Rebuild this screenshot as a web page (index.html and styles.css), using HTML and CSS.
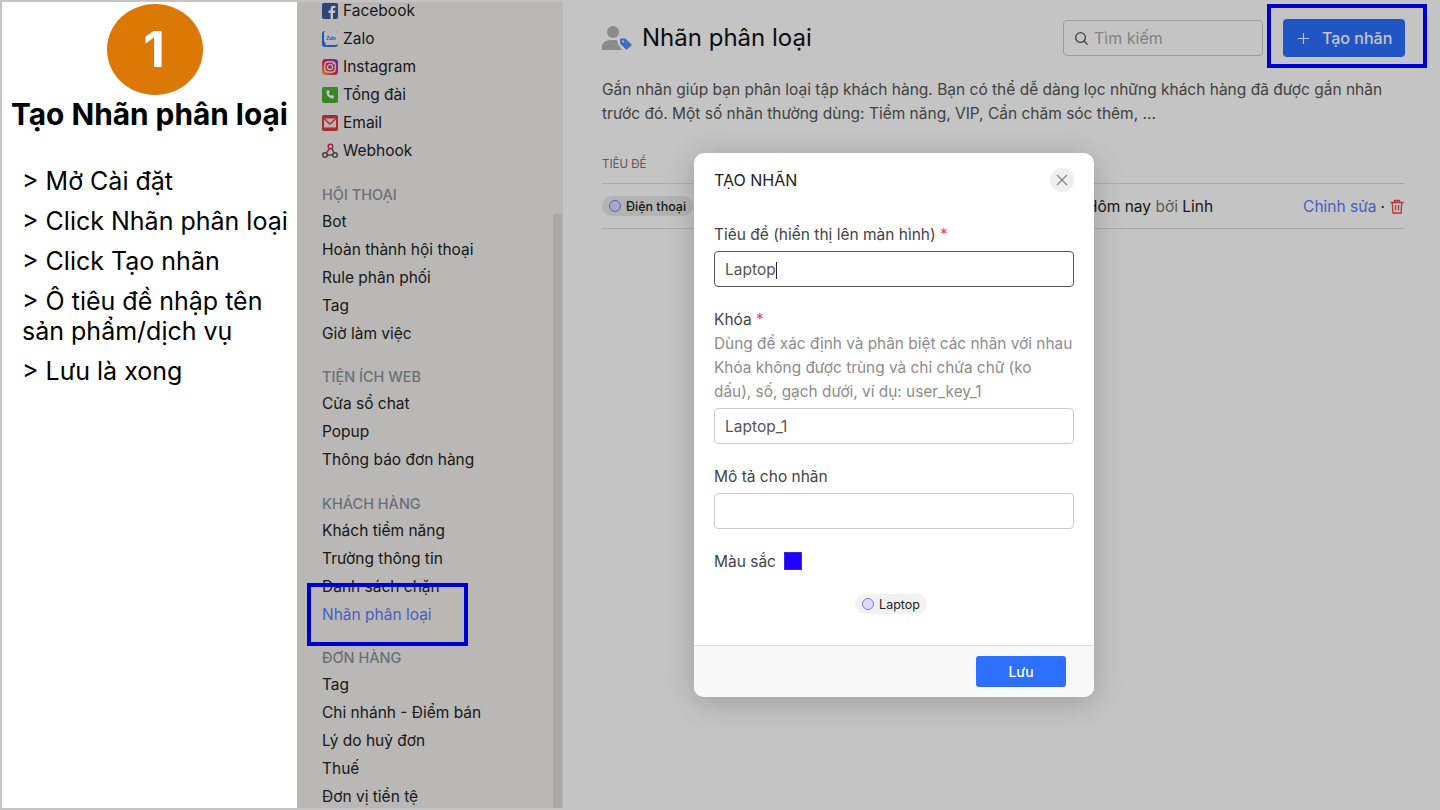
FILE: index.html
```html
<!DOCTYPE html>
<html lang="vi">
<head>
  <meta charset="UTF-8">
  <title>Tạo Nhãn phân loại</title>
  <link rel="stylesheet" href="styles.css">
</head>
<body>
  <div class="page">

    <aside class="guide">
      <div class="step-badge">1</div>
      <h1>Tạo Nhãn phân loại</h1>
      <ul class="steps">
        <li>&gt; Mở Cài đặt</li>
        <li>&gt; Click Nhãn phân loại</li>
        <li>&gt; Click Tạo nhãn</li>
        <li>&gt; Ô tiêu đề nhập tên sản phẩm/dịch vụ</li>
        <li>&gt; Lưu là xong</li>
      </ul>
    </aside>

    <div class="app">
      <nav class="sidebar">
        <div class="nav-scroll">
          <a class="nav-item">
            <svg class="nav-icon" viewBox="0 0 16 16"><rect width="16" height="16" rx="2" fill="#3b5998"/><path d="M11 16V10h2l.4-2.400H11V6.200c0-.8.3-1.200 1.200-1.200h1.200V2.900c-.5-.1-1.100-.1-1.800-.1-1.900 0-3 1.100-3 3v1.800H6.500V10h2.100v6z" fill="#fff"/></svg>
            Facebook
          </a>
          <a class="nav-item">
            <svg class="nav-icon" viewBox="0 0 16 16"><rect width="16" height="16" rx="3" fill="#2f6fe0"/><path d="M4 0h9a3 3 0 0 1 3 3v9a2 2 0 0 1-2 2H5.500l-2 .8.300-2.300C2.500 11.500 2 10.500 2 9V2a2 2 0 0 1 2-2z" fill="#eef2f7"/><text class="zalo-text" x="9" y="8.800" text-anchor="middle">Zalo</text></svg>
            Zalo
          </a>
          <a class="nav-item">
            <svg class="nav-icon" viewBox="0 0 16 16">
              <defs><linearGradient id="insta" x1="0" y1="1" x2="1" y2="0"><stop offset="0" stop-color="#fdb33b"/><stop offset=".45" stop-color="#ee2a5f"/><stop offset="1" stop-color="#6a3fd0"/></linearGradient></defs>
              <rect width="16" height="16" rx="3.500" fill="url(#insta)"/>
              <rect x="2.800" y="2.800" width="10.400" height="10.400" rx="3" fill="none" stroke="#fff" stroke-width="1.200"/>
              <circle cx="8" cy="8" r="2.500" fill="none" stroke="#fff" stroke-width="1.200"/>
              <circle cx="11.200" cy="4.800" r=".7" fill="#fff"/>
            </svg>
            Instagram
          </a>
          <a class="nav-item">
            <svg class="nav-icon" viewBox="0 0 16 16"><rect width="16" height="16" rx="2" fill="#4caf32"/><path d="M5.200 3.500l1.500-.4 1 2.300-1 .9c.4 1 1.200 1.900 2.300 2.500l1-.9 2.200 1.200-.5 1.600c-.2.500-.8.800-1.400.7C7.200 11.300 4.900 8.900 4.400 5c-.1-.7.300-1.300.8-1.500z" fill="#fff"/></svg>
            Tổng đài
          </a>
          <a class="nav-item">
            <svg class="nav-icon" viewBox="0 0 16 16"><rect width="16" height="16" rx="2" fill="#d63c3c"/><rect x="2" y="3.500" width="12" height="9" fill="#f9e4e4"/><path d="M2 3.500L8 9l6-5.500" fill="none" stroke="#d63c3c" stroke-width="1.300"/></svg>
            Email
          </a>
          <a class="nav-item">
            <svg class="nav-icon" viewBox="0 0 16 16" fill="none" stroke-width="1.500">
              <circle cx="8.500" cy="3.500" r="2.300" stroke="#c23b5a"/>
              <circle cx="3" cy="12" r="2.300" stroke="#555"/>
              <circle cx="13" cy="12" r="2.300" stroke="#555"/>
              <path d="M7.500 5.500L4 10.500" stroke="#c23b5a"/>
              <path d="M9.800 5.500l2.400 4.500M5.500 12h5" stroke="#555"/>
            </svg>
            Webhook
          </a>

          <div class="nav-title">HỘI THOẠI</div>
          <a class="nav-item">Bot</a>
          <a class="nav-item">Hoàn thành hội thoại</a>
          <a class="nav-item">Rule phân phối</a>
          <a class="nav-item">Tag</a>
          <a class="nav-item">Giờ làm việc</a>

          <div class="nav-title">TIỆN ÍCH WEB</div>
          <a class="nav-item">Cửa sổ chat</a>
          <a class="nav-item">Popup</a>
          <a class="nav-item">Thông báo đơn hàng</a>

          <div class="nav-title">KHÁCH HÀNG</div>
          <a class="nav-item">Khách tiềm năng</a>
          <a class="nav-item">Trường thông tin</a>
          <a class="nav-item">Danh sách chặn</a>
          <a class="nav-item active">Nhãn phân loại</a>

          <div class="nav-title">ĐƠN HÀNG</div>
          <a class="nav-item">Tag</a>
          <a class="nav-item">Chi nhánh - Điểm bán</a>
          <a class="nav-item">Lý do huỷ đơn</a>
          <a class="nav-item">Thuế</a>
          <a class="nav-item">Đơn vị tiền tệ</a>
        </div>
        <div class="scrollbar"><div class="scrollbar-thumb"></div></div>
      </nav>

      <main class="content">
        <header class="content-head">
          <svg class="head-icon" viewBox="0 0 30 24">
            <circle cx="11" cy="6" r="6" fill="#b4b4b4"/>
            <path d="M0 24v-3c0-4 4-7 9-7h6l1 4 4 6z" fill="#b4b4b4"/>
            <path d="M18.500 13h5l6 6-5 4.500-6-6z" fill="#5290f7" stroke="#5290f7" stroke-linejoin="round"/>
            <circle cx="21" cy="15.500" r="1" fill="#fff"/>
          </svg>
          <h2>Nhãn phân loại</h2>
          <div class="search">
            <svg viewBox="0 0 16 16" fill="none" stroke="#555" stroke-width="1.400"><circle cx="7" cy="7" r="5.200"/><path d="M11 11l3.500 3.500"/></svg>
            <span>Tìm kiếm</span>
          </div>
          <button class="btn-create">
            <svg class="plus" viewBox="0 0 12 12" fill="none" stroke="#fff" stroke-width="1.200"><path d="M6 0v12M0 6h12"/></svg>
            Tạo nhãn
          </button>
        </header>

        <p class="intro">Gắn nhãn giúp bạn phân loại tập khách hàng. Bạn có thể dễ dàng lọc những khách hàng đã được gắn nhãn trước đó. Một số nhãn thường dùng: Tiềm năng, VIP, Cần chăm sóc thêm, ...</p>

        <div class="table-head">TIÊU ĐỀ</div>
        <div class="table-row">
          <span class="tag"><i class="tag-dot"></i>Điện thoại</span>
          <span class="row-meta">Hôm nay <em>bởi</em> Linh</span>
          <span class="row-actions">
            <a>Chỉnh sửa</a> ·
            <svg class="trash" viewBox="0 0 14 15" fill="none" stroke="#f04545" stroke-width="1.300"><path d="M.5 3.500h13M4.500 3.500V1.500h5v2M2.200 3.500l.8 10.500h8l.8-10.500M5.500 6v5.500M8.500 6v5.500"/></svg>
          </span>
        </div>
      </main>

      <div class="backdrop"></div>

      <section class="modal">
        <div class="modal-head">
          <h3>TẠO NHÃN</h3>
          <button class="modal-close">
            <svg viewBox="0 0 12 12" fill="none" stroke="#888" stroke-width="1.300"><path d="M1 1l10 10M11 1L1 11"/></svg>
          </button>
        </div>
        <div class="modal-body">
          <label>Tiêu đề (hiển thị lên màn hình) <b>*</b></label>
          <div class="input focused">Laptop<span class="caret"></span></div>

          <label class="gap-top">Khóa <b>*</b></label>
          <p class="help">Dùng để xác định và phân biệt các nhãn với nhau<br>Khóa không được trùng và chỉ chứa chữ (ko<br>dấu), số, gạch dưới, ví dụ: user_key_1</p>
          <div class="input">Laptop_1</div>

          <label class="gap-top">Mô tả cho nhãn</label>
          <div class="input"></div>

          <div class="color-row">Màu sắc <span class="swatch"></span></div>
          <div class="preview"><span class="tag tag-light"><i class="tag-dot"></i>Laptop</span></div>
        </div>
        <div class="modal-foot">
          <button class="btn-save">Lưu</button>
        </div>
      </section>
    </div>

    <div class="mark mark-nav"></div>
    <div class="mark mark-create"></div>
  </div>
</body>
</html>
```

FILE: styles.css
```css
* {
  box-sizing: border-box;
}

body {
  margin: 0;
  font-family: Inter, 'Noto Sans', sans-serif;
  color: #222;
}

h1, h2, h3, p, ul {
  margin: 0;
  padding: 0;
}

.page {
  position: relative;
  display: flex;
  width: 1440px;
  height: 810px;
  overflow: hidden;
  border: 2px solid #c4c4c4;
  background: #fff;
}

/* left guide panel */
.guide {
  width: 295px;
  flex-shrink: 0;
  padding-top: 2px;
  color: #000;
  background: #fff;
}

.step-badge {
  width: 96px;
  height: 91px;
  margin-left: 105px;
  padding-right: 2px;
  border-radius: 50%;
  background: #dc7805;
  color: #fff;
  font-size: 50px;
  font-weight: 700;
  line-height: 91px;
  text-align: center;
}

.guide h1 {
  margin-top: 2px;
  font-size: 29.8px;
  font-weight: 700;
  line-height: 34px;
  text-align: center;
  white-space: nowrap;
}

.steps {
  list-style: none;
  margin-top: 35px;
  padding: 0 0 0 20px;
  font-size: 25px;
  line-height: 30px;
}

.steps li {
  margin-bottom: 10px;
}

/* app */
.app {
  position: relative;
  display: flex;
  flex: 1;
  min-width: 0;
}

.sidebar {
  display: flex;
  width: 265px;
  flex-shrink: 0;
  background: #f3f0ee;
}

.nav-scroll {
  flex: 1;
  padding-left: 25px;
  margin-top: -5.2px;
}

.nav-item {
  display: flex;
  align-items: center;
  gap: 5px;
  height: 28px;
  font-size: 15.5px;
  color: #222;
}

.nav-item.active {
  color: #5c7cfa;
}

.nav-icon {
  width: 16px;
  height: 16px;
  flex-shrink: 0;
}

.zalo-text {
  font-size: 4.500px;
  font-weight: 700;
  fill: #2f6fe0;
}

.nav-title {
  height: 25.5px;
  margin-top: 17px;
  font-size: 14.5px;
  font-weight: 500;
  line-height: 26.5px;
  color: #8a929c;
}

.scrollbar {
  width: 9px;
  background: #f3f0ee;
}

.scrollbar-thumb {
  height: 594px;
  margin-top: 212px;
  background: #dcdcdc;
}

.content {
  flex: 1;
  min-width: 0;
  padding: 17px 33px 0 39px;
  background: #fff;
  border-left: 1px solid #eee;
}

.content-head {
  display: flex;
  align-items: center;
  height: 38px;
}

.head-icon {
  width: 30px;
  height: 24px;
  margin-right: 10px;
}

.content-head h2 {
  flex: 1;
  font-size: 24px;
  font-weight: 400;
  line-height: 38px;
  color: #111;
}

.search {
  display: flex;
  align-items: center;
  gap: 5px;
  width: 200px;
  height: 36px;
  padding-left: 10px;
  border: 1px solid #ccc;
  border-radius: 4px;
  font-size: 16px;
  color: #aaa;
}

.search svg {
  width: 15px;
  height: 15px;
}

.btn-create {
  display: flex;
  align-items: center;
  gap: 13px;
  width: 122px;
  height: 38px;
  margin-left: 20px;
  padding: 0 0 0 15px;
  border: 0;
  border-radius: 4px;
  background: #2d6fff;
  color: #fff;
  font-family: inherit;
  font-size: 16px;
  font-weight: 500;
}

.plus {
  width: 11px;
  height: 11px;
}

.intro {
  margin-top: 21px;
  font-size: 15.5px;
  line-height: 24px;
  color: #555;
}

.table-head {
  margin-top: 25px;
  height: 33px;
  border-bottom: 1px solid #ddd;
  font-size: 11.5px;
  line-height: 26px;
  color: #777;
}

.table-row {
  display: flex;
  align-items: center;
  height: 45px;
  border-bottom: 1px solid #ddd;
  font-size: 15.5px;
}

.row-meta {
  margin-left: auto;
  margin-right: 90px;
}

.row-meta em {
  font-style: normal;
  color: #777;
}

.row-actions {
  display: flex;
  align-items: center;
  gap: 4px;
  padding-right: 1px;
}

.row-actions a {
  color: #5c7cfa;
}

.trash {
  width: 14px;
  height: 15px;
  margin-left: 1px;
}

.tag {
  display: inline-flex;
  align-items: center;
  gap: 5px;
  height: 20px;
  padding: 0 7px;
  border-radius: 10px;
  background: #e9e9e9;
  font-size: 12.5px;
  font-weight: 500;
}

.tag-dot {
  width: 12px;
  height: 12px;
  border: 1px solid #7d78ff;
  border-radius: 50%;
  background: #dcdcff;
}

.backdrop {
  position: absolute;
  inset: 0;
  background: rgba(0, 0, 0, 0.23);
}

/* modal */
.modal {
  position: absolute;
  left: 397px;
  top: 151px;
  width: 400px;
  height: 544px;
  display: flex;
  flex-direction: column;
  border-radius: 10px;
  background: #fff;
  box-shadow: 0 5px 30px rgba(0, 0, 0, 0.2);
  overflow: hidden;
}

.modal-head {
  display: flex;
  align-items: center;
  justify-content: space-between;
  height: 54px;
  padding: 0 20px;
}

.modal-head h3 {
  font-size: 16px;
  font-weight: 400;
}

.modal-close {
  display: flex;
  align-items: center;
  justify-content: center;
  width: 24px;
  height: 24px;
  padding: 0;
  border: 0;
  border-radius: 50%;
  background: #eee;
}

.modal-close svg {
  width: 12px;
  height: 12px;
}

.modal-body {
  flex: 1;
  padding: 15px 20px 0;
  font-size: 15.5px;
  color: #444;
}

.modal-body label {
  display: block;
  height: 24px;
  line-height: 26px;
}

.modal-body label b {
  font-weight: 400;
  color: #f04545;
}

.gap-top {
  margin-top: 20px;
}

.help {
  padding-top: 1px;
  font-size: 15.4px;
  color: #8c8c8c;
  line-height: 24px;
  white-space: nowrap;
}

.input {
  height: 36px;
  margin-top: 5px;
  padding: 0 10px;
  border: 1px solid #ccc;
  border-radius: 4px;
  line-height: 36px;
  color: #555;
}

.help + .input {
  margin-top: 4px;
}

.input.focused {
  border-color: #555;
}

.caret {
  display: inline-block;
  width: 1px;
  height: 17px;
  background: #222;
  vertical-align: middle;
}

.color-row {
  display: flex;
  align-items: center;
  gap: 8px;
  margin-top: 23px;
  height: 18px;
}

.swatch {
  width: 18px;
  height: 18px;
  border: 1px solid #3a28e0;
  background: #2200ff;
}

.preview {
  margin-top: 24px;
  padding-right: 6px;
  text-align: center;
}

.tag-light {
  background: #f1f1f1;
  font-weight: 400;
  color: #222;
}

.modal-foot {
  display: flex;
  justify-content: flex-end;
  align-items: center;
  height: 52px;
  padding-right: 28px;
  border-top: 1px solid #ddd;
  background: #f8f8f8;
}

.btn-save {
  width: 90px;
  height: 31px;
  border: 0;
  border-radius: 3px;
  background: #2d6fff;
  color: #fff;
  font-family: inherit;
  font-size: 14px;
  font-weight: 500;
}

/* blue annotation frames */
.mark {
  position: absolute;
  border: 4px solid #0000cc;
}

.mark-nav {
  left: 305px;
  top: 581px;
  width: 161px;
  height: 63px;
}

.mark-create {
  left: 1265px;
  top: 2px;
  width: 160px;
  height: 64px;
}
```
